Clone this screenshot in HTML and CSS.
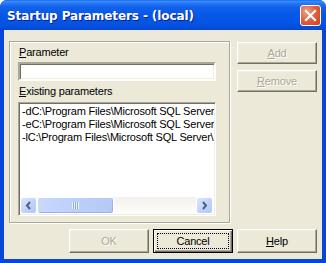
FILE: index.html
```html
<!DOCTYPE html>
<html>
<head>
<meta charset="utf-8">
<link rel="stylesheet" href="styles.css">
</head>
<body>
<div class="window">
  <div class="titlebar">
    <span class="title">Startup Parameters - (local)</span>
    <span class="close">
      <svg width="21" height="21" viewBox="0 0 21 21">
        <path d="M6 6 L15 15 M15 6 L6 15" stroke="#fff" stroke-width="2.2" stroke-linecap="square"/>
      </svg>
    </span>
  </div>
  <div class="client">
    <div class="top">
      <div class="group">
        <div class="label"><u>P</u>arameter</div>
        <div class="textbox"></div>
        <div class="label label2"><u>E</u>xisting parameters</div>
        <div class="listbox">
          <div class="items">
            <div class="item">-dC:\Program Files\Microsoft SQL Server</div>
            <div class="item">-eC:\Program Files\Microsoft SQL Server</div>
            <div class="item">-lC:\Program Files\Microsoft SQL Server\</div>
          </div>
          <div class="hscroll">
            <span class="sbtn">
              <svg width="17" height="17" viewBox="0 0 17 17"><path d="M10 5 L7 8.5 L10 12" fill="none" stroke="#4d6185" stroke-width="2"/></svg>
            </span>
            <span class="track">
              <span class="thumb"><span class="grip"></span></span>
            </span>
            <span class="sbtn">
              <svg width="17" height="17" viewBox="0 0 17 17"><path d="M7 5 L10 8.5 L7 12" fill="none" stroke="#4d6185" stroke-width="2"/></svg>
            </span>
          </div>
        </div>
      </div>
      <div class="side">
        <div class="btn disabled"><u>A</u>dd</div>
        <div class="btn disabled"><u>R</u>emove</div>
      </div>
    </div>
    <div class="bottom">
      <div class="btn disabled">OK</div>
      <div class="btn default"><span class="focus">Cancel</span></div>
      <div class="btn"><u>H</u>elp</div>
    </div>
  </div>
</div>
</body>
</html>
```
FILE: styles.css
```css
html, body {
  margin: 0;
  padding: 0;
  background: #fff;
}
.window {
  width: 326px;
  height: 263px;
  display: flex;
  flex-direction: column;
  background: #0846d9;
  border-radius: 7px 7px 0 0;
  overflow: hidden;
  font-family: "Liberation Sans", Arial, sans-serif;
  font-size: 11px;
  color: #000;
}
.titlebar {
  height: 30px;
  flex: none;
  display: flex;
  align-items: center;
  justify-content: space-between;
  padding: 0 5px 0 7px;
  background: linear-gradient(#0a5ae6 0, #3d8ffe 1px, #2b7af6 3px, #1262eb 7px, #0658e8 14px, #0556e7 20px, #0451df 26px, #0348d3 30px);
  box-sizing: border-box;
}
.title {
  color: #fff;
  font-family: "DejaVu Sans", sans-serif;
  font-weight: bold;
  font-size: 12px;
  letter-spacing: -0.1px;
  text-shadow: 1px 1px 0 #0a1e8c;
  margin-top: 2px;
}
.close {
  width: 21px;
  height: 21px;
  box-sizing: border-box;
  border: 1px solid #fff;
  border-radius: 3px;
  background: radial-gradient(circle at 30% 30%, #f0a288 0, #e3623f 45%, #c8401d 100%);
  display: flex;
  margin-top: 1px;
}
.close svg {
  margin: -1px;
}
.client {
  flex: 1;
  margin: 0 4px 4px 4px;
  background: #ece9d8;
  display: flex;
  flex-direction: column;
  letter-spacing: -0.2px;
}
.top {
  display: flex;
  align-items: flex-start;
}
.group {
  margin: 11px 0 0 5px;
  width: 221px;
  height: 182px;
  box-sizing: border-box;
  border: 1px solid #aca899;
  box-shadow: inset 1px 1px 0 #fff, 1px 1px 0 #fff;
  padding: 4px 8px 0 8px;
  display: flex;
  flex-direction: column;
}
.label {
  height: 13px;
  line-height: 13px;
  margin-left: 1px;
}
.textbox {
  margin-top: 3px;
  height: 19px;
  width: 198px;
  box-sizing: border-box;
  background: #fff;
  border: 2px solid;
  border-color: #aca899 #fff #fff #aca899;
  box-shadow: inset 1px 1px 0 #716f64, inset -1px -1px 0 #f1efe2;
}
.label2 {
  margin-top: 4px;
}
.listbox {
  margin-top: 4px;
  width: 198px;
  height: 114px;
  box-sizing: border-box;
  background: #fff;
  border-style: solid;
  border-width: 1px;
  border-color: #aca899 #fff #fff #aca899;
  padding: 1px;
  box-shadow: inset 1px 1px 0 #716f64, inset -1px -1px 0 #f1efe2;
  display: flex;
  flex-direction: column;
}
.items {
  flex: 1;
  overflow: hidden;
  padding: 1px 0 0 2px;
}
.item {
  white-space: nowrap;
  line-height: 13px;
  height: 13px;
}
.hscroll {
  height: 17px;
  display: flex;
  background: #fcfcfe;
  margin-right: 1px;
}
.sbtn {
  width: 17px;
  height: 17px;
  box-sizing: border-box;
  border: 1px solid #fff;
  border-radius: 3px;
  background: linear-gradient(135deg, #dae6fe, #bfd1fa 60%, #b3c8f5);
  display: flex;
}
.sbtn svg {
  margin: -1px;
}
.track {
  flex: 1;
  display: flex;
  background: linear-gradient(#f3f1ec, #fefefb);
}
.thumb {
  width: 77px;
  height: 17px;
  box-sizing: border-box;
  border: 1px solid #fff;
  border-radius: 3px;
  background: linear-gradient(90deg, #c9d8fc, #bcd0fb 50%, #b5c9f4);
  box-shadow: inset -1px -1px 0 #9bb2e8;
  display: flex;
  align-items: center;
  justify-content: center;
}
.grip {
  width: 7px;
  height: 7px;
  background: repeating-linear-gradient(90deg, #eef4fe 0 1px, #8ca8e6 1px 2px);
}
.side {
  display: flex;
  flex-direction: column;
  gap: 6px;
  margin: 12px 0 0 7px;
}
.btn {
  width: 80px;
  height: 22px;
  box-sizing: border-box;
  background: #ece9d8;
  border: 1px solid;
  border-color: #fff #716f64 #716f64 #fff;
  box-shadow: inset -1px -1px 0 #aca899, inset 1px 1px 0 #f1efe2;
  display: flex;
  align-items: center;
  justify-content: center;
  line-height: 13px;
}
.btn.disabled {
  color: #aca899;
  text-shadow: 1px 1px 0 #fff;
}
.bottom {
  display: flex;
  justify-content: flex-end;
  gap: 4px;
  margin-top: 6px;
  padding-right: 5px;
}
.bottom .btn {
  height: 24px;
}
.btn.default {
  border: 1px solid #000;
  box-shadow: inset 1px 1px 0 #fff, inset -1px -1px 0 #716f64, inset -2px -2px 0 #aca899;
}
.focus {
  display: flex;
  align-items: center;
  justify-content: center;
  width: 72px;
  height: 16px;
  box-sizing: border-box;
  border: 1px dotted #000;
}
u {
  text-decoration: underline;
  text-underline-offset: 1px;
}
```
